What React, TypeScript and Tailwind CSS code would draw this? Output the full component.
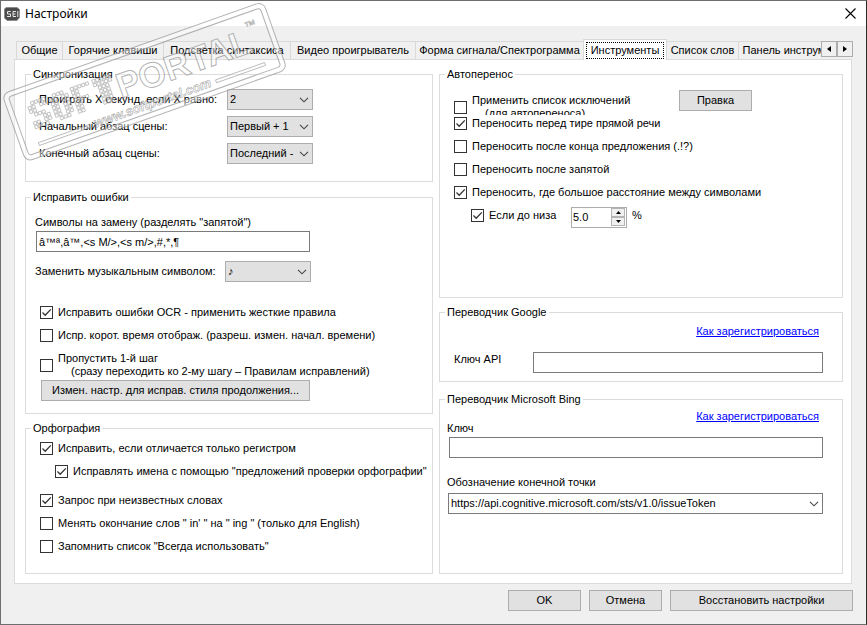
import type { ReactNode } from 'react'

interface CheckProps {
  children: ReactNode
  checked?: boolean
  className?: string
}

interface GroupProps {
  title: string
  className?: string
  bodyClassName?: string
  children: ReactNode
}

interface PickerProps {
  id: string
  value: string
  className: string
}

const tabs = [
  { label: 'Общие', width: 'w-[47px] border-l' },
  { label: 'Горячие клавиши', width: 'w-[101px]' },
  { label: 'Подсветка синтаксиса', width: 'w-[127px]' },
  { label: 'Видео проигрыватель', width: 'w-[125px]' },
  { label: 'Форма сигнала/Спектрограмма', width: 'w-[168px]' },
  { label: 'Инструменты', width: 'w-[84px]', active: true },
  { label: 'Список слов', width: 'w-[72px]' },
  { label: 'Панель инструментов', width: 'w-[120px]' },
]

const softLetters = [
  ['01111', '11011', '11000', '01110', '00011', '11011', '11110'],
  ['01110', '11011', '11011', '11011', '11011', '11011', '01110'],
  ['11111', '11000', '11000', '11110', '11000', '11000', '11000'],
  ['11111', '11111', '01110', '01110', '01110', '01110', '01110'],
]

function Group({ title, className = '', bodyClassName = '', children }: GroupProps) {
  return (
    <fieldset className={`min-w-0 border border-[#dcdcdc] ${className}`}>
      <legend className="ml-[5px] px-[2px] leading-[15px]">{title}</legend>
      <div className={bodyClassName}>{children}</div>
    </fieldset>
  )
}

function Check({ children, checked = false, className = 'h-[17px]' }: CheckProps) {
  return (
    <label className={`flex items-center gap-[5px] whitespace-nowrap ${className}`}>
      <span className="grid size-[13px] shrink-0">
        <input
          type="checkbox"
          defaultChecked={checked}
          className="peer col-start-1 row-start-1 size-[13px] appearance-none border border-[#333] bg-white"
        />
        <svg
          viewBox="0 0 13 13"
          className="pointer-events-none invisible col-start-1 row-start-1 size-[13px] peer-checked:visible"
        >
          <path d="M2.5 6.5 5.2 9.2 10.8 3.4" fill="none" stroke="#333" strokeWidth="1.3" />
        </svg>
      </span>
      {children}
    </label>
  )
}

function Picker({ id, value, className }: PickerProps) {
  return (
    <span className={`grid h-[21px] ${className}`}>
      <select
        id={id}
        defaultValue={value}
        className="col-start-1 row-start-1 w-full min-w-0 appearance-none border border-inherit bg-inherit pr-4 pl-[2px] text-black"
      >
        <option>{value}</option>
      </select>
      <svg
        viewBox="0 0 10 6"
        className="pointer-events-none col-start-1 row-start-1 mr-1 h-[6px] w-[10px] self-center justify-self-end"
      >
        <path d="M1 .8 5 4.8 9 .8" fill="none" stroke="#444" strokeWidth="1.1" />
      </svg>
    </span>
  )
}

function Button({ children, className = '' }: { children: ReactNode; className?: string }) {
  return (
    <button type="button" className={`h-[21px] border border-[#adadad] bg-[#e1e1e1] ${className}`}>
      {children}
    </button>
  )
}

function Stamp() {
  return (
    <svg
      viewBox="0 0 290 168"
      className="pointer-events-none absolute top-0 left-0 z-20 h-[168px] w-[290px]"
      aria-hidden="true"
    >
      <g
        transform="translate(1 93) rotate(-19.5)"
        fill="#fff"
        fillOpacity="0.45"
        stroke="#8a8a8a"
        strokeOpacity="0.65"
        strokeWidth="1"
        fontFamily="Liberation Sans, sans-serif"
      >
        <path
          fillRule="evenodd"
          d="M7 0H270a7 7 0 0 1 7 7V65a7 7 0 0 1-7 7H7a7 7 0 0 1-7-7V7a7 7 0 0 1 7-7ZM8 5a3 3 0 0 0-3 3V64a3 3 0 0 0 3 3H269a3 3 0 0 0 3-3V8a3 3 0 0 0-3-3Z"
        />
        {softLetters.map((rows, l) =>
          rows.map((cells, r) =>
            cells.split('').map((on, c) =>
              on === '1' ? (
                <rect key={`${l}${r}${c}`} x={20 + l * 23 + c * 4} y={17 + r * 4} width="3" height="3" strokeWidth="0.7" />
              ) : null,
            ),
          ),
        )}
        <text x="111" y="44" fontSize="35" fontWeight="bold">PORTAL</text>
        <text x="251" y="22" fontSize="12" strokeWidth="0.6">™</text>
        <text x="77" y="63" fontSize="13" fontWeight="bold" fontStyle="italic" strokeWidth="0.7">
          www.softportal.com
        </text>
        <rect x="18" y="58" width="54" height="3" strokeWidth="0.8" />
        <rect x="206" y="58" width="52" height="3" strokeWidth="0.8" />
      </g>
    </svg>
  )
}

function TitleBar() {
  return (
    <header className="flex h-[25px] items-center bg-white pr-[10px] pl-[3px]">
      <svg viewBox="0 0 16 16" className="size-4">
        <path d="M2 1.5h11l2.5 2v8L13 14.5H3L.5 12V3Z" fill="#4b4b4b" stroke="#8c8c8c" />
        <path d="M6.7 5.5H3.5V8h3v2.500H3M12 5.500H9v5h3M9 8h2.500M13.800 5v6" fill="none" stroke="#e8e8e8" />
      </svg>
      <h1 className="ml-[5px] flex-1 font-['Noto_Sans',sans-serif] text-[12px]">Настройки</h1>
      <button type="button" aria-label="Закрыть" className="size-[11px]">
        <svg viewBox="0 0 11 11" className="size-[11px]">
          <path d="m.5.5 10 10m0-10-10 10" stroke="#000" strokeWidth="1.1" />
        </svg>
      </button>
    </header>
  )
}

function TabStrip() {
  return (
    <div className="relative z-10 -mb-px flex h-[21px] items-end">
      <div role="tablist" className="flex h-[21px] min-w-0 flex-1 items-end overflow-hidden pl-[2px]">
        {tabs.map((tab) =>
          tab.active ? (
            <button
              key={tab.label}
              type="button"
              role="tab"
              aria-selected="true"
              className={`-ml-px h-[21px] shrink-0 border border-b-0 border-[#d9d9d9] bg-white p-[2px] ${tab.width}`}
            >
              <span className="block border border-dotted border-black leading-[15px]">{tab.label}</span>
            </button>
          ) : (
            <button
              key={tab.label}
              type="button"
              role="tab"
              aria-selected="false"
              className={`mb-px h-[18px] shrink-0 border-t border-r border-[#d9d9d9] leading-[17px] whitespace-nowrap ${tab.width}`}
            >
              {tab.label}
            </button>
          ),
        )}
      </div>
      <div className="mb-[3px] flex h-4 shrink-0">
        <button type="button" aria-label="Назад" className="flex w-4 items-center justify-center border border-[#adadad]">
          <svg viewBox="0 0 4 6" className="h-[6px] w-1">
            <path d="M4 0v6L0 3Z" />
          </svg>
        </button>
        <button type="button" aria-label="Вперёд" className="flex w-4 items-center justify-center border border-[#adadad]">
          <svg viewBox="0 0 4 6" className="h-[6px] w-1">
            <path d="M0 0v6l4-3Z" />
          </svg>
        </button>
      </div>
    </div>
  )
}

function LeftColumn() {
  return (
    <div className="flex min-w-0 flex-col">
      <Group
        title="Синхронизация"
        className="mb-2"
        bodyClassName="grid grid-cols-[188px_86px] items-center gap-y-[6px] pt-[7px] pb-[17px] pl-[13px]"
      >
        <label htmlFor="play">Проиграть X секунд, если X равно:</label>
        <Picker id="play" value="2" className="border-[#adadad] bg-[#e1e1e1]" />
        <label htmlFor="start">Начальный абзац сцены:</label>
        <Picker id="start" value="Первый + 1" className="border-[#adadad] bg-[#e1e1e1]" />
        <label htmlFor="end">Конечный абзац сцены:</label>
        <Picker id="end" value="Последний -" className="border-[#adadad] bg-[#e1e1e1]" />
      </Group>

      <Group title="Исправить ошибки" className="mb-[7px]" bodyClassName="pt-[10px] pr-2 pb-3 pl-[9px]">
        <label htmlFor="symbols" className="mb-px block">Символы на замену (разделять "запятой")</label>
        <input
          id="symbols"
          defaultValue="â™ª,â™,<s M/>,<s m/>,#,*,¶"
          className="mb-[9px] ml-px block h-[21px] w-[274px] border border-[#7a7a7a] bg-white px-[2px]"
        />
        <div className="mb-[22px] flex items-center">
          <label htmlFor="music" className="w-[190px]">Заменить музыкальным символом:</label>
          <Picker id="music" value="♪" className="w-[86px] border-[#adadad] bg-[#e1e1e1]" />
        </div>
        <div className="pl-[5px]">
          <Check checked>Исправить ошибки OCR - применить жесткие правила</Check>
          <Check className="mt-[6px] h-[17px]">Испр. корот. время отображ. (разреш. измен. начал. времени)</Check>
          <Check className="mt-2 mb-[2px] h-[26px]">
            <span className="leading-[13px]">
              Пропустить 1-й шаг
              <span className="block pl-[13px]">(сразу переходить ко 2-му шагу – Правилам исправлений)</span>
            </span>
          </Check>
          <Button className="ml-px w-[269px]">Измен. настр. для исправ. стиля продолжения...</Button>
        </div>
      </Group>

      <Group title="Орфография" className="flex-1" bodyClassName="pt-1 pb-[18px] pl-[14px]">
        <Check checked>Исправить, если отличается только регистром</Check>
        <Check checked className="mt-[6px] ml-[15px] h-[17px]">
          Исправлять имена с помощью "предложений проверки орфографии"
        </Check>
        <Check checked className="mt-3 h-[17px]">Запрос при неизвестных словах</Check>
        <Check className="mt-[6px] h-[17px]">Менять окончание слов " in' " на " ing " (только для English)</Check>
        <Check className="mt-[6px] h-[17px]">Запомнить список "Всегда использовать"</Check>
      </Group>
    </div>
  )
}

function RightColumn() {
  return (
    <div className="flex min-w-0 flex-col">
      <Group title="Автоперенос" className="mb-[7px]" bodyClassName="pb-[69px] pl-[14px]">
        <div className="flex items-start">
          <div className="mt-3 h-[21px] w-[225px] shrink-0 overflow-hidden">
            <Check className="h-[26px]">
              <span className="leading-[13px]">
                Применить список исключений
                <span className="block pl-[13px]">(для автопереноса)</span>
              </span>
            </Check>
          </div>
          <Button className="mt-2 w-[73px]">Правка</Button>
        </div>
        <div className="flex flex-col gap-[6px]">
          <Check checked>Переносить перед тире прямой речи</Check>
          <Check>Переносить после конца предложения (.!?)</Check>
          <Check>Переносить после запятой</Check>
          <Check checked>Переносить, где большое расстояние между символами</Check>
          <div className="flex items-start pl-[17px]">
            <Check checked className="h-[17px] w-[100px]">Если до низа</Check>
            <div className="flex h-[21px] w-14 border border-[#adadad] bg-white pr-px">
              <input aria-label="Процент" defaultValue="5.0" className="min-w-0 flex-1 pl-px leading-[17px]" />
              <div className="flex w-[14px] flex-col pb-px">
                <button type="button" aria-label="Больше" className="flex flex-1 items-center justify-center border border-[#b4b4b4] bg-[#f0f0f0]">
                  <svg viewBox="0 0 5 3" className="h-[3px] w-[5px]">
                    <path d="M0 3h5L2.500 0Z" />
                  </svg>
                </button>
                <button type="button" aria-label="Меньше" className="flex flex-1 items-center justify-center border border-[#b4b4b4] bg-[#f0f0f0]">
                  <svg viewBox="0 0 5 3" className="h-[3px] w-[5px]">
                    <path d="M0 0h5L2.500 3Z" />
                  </svg>
                </button>
              </div>
            </div>
            <span className="pt-px pl-[5px]">%</span>
          </div>
        </div>
      </Group>

      <Group title="Переводчик Google" className="mb-[10px]" bodyClassName="pt-1 pr-[19px] pb-2 pl-[14px]">
        <div className="mb-[13px] flex justify-end pr-1">
          <a href="#google" className="text-[#0000ff] underline">Как зарегистрироваться</a>
        </div>
        <div className="flex">
          <label htmlFor="google-key" className="w-[79px] shrink-0">Ключ API</label>
          <input id="google-key" className="h-[21px] min-w-0 flex-1 border border-[#7a7a7a] bg-white px-[2px]" />
        </div>
      </Group>

      <Group title="Переводчик Microsoft Bing" className="flex-1" bodyClassName="pt-[2px] pr-[19px] pb-5 pl-[7px]">
        <div className="mb-px flex justify-between pr-1">
          <label htmlFor="bing-key" className="pt-3">Ключ</label>
          <a href="#bing" className="text-[#0000ff] underline">Как зарегистрироваться</a>
        </div>
        <div className="mb-[17px] flex pl-[2px]">
          <input id="bing-key" className="h-[21px] min-w-0 flex-1 border border-[#7a7a7a] bg-white px-[2px]" />
        </div>
        <label htmlFor="endpoint" className="mb-[3px] block">Обозначение конечной точки</label>
        <Picker
          id="endpoint"
          value="https://api.cognitive.microsoft.com/sts/v1.0/issueToken"
          className="ml-px border-[#7a7a7a] bg-white"
        />
      </Group>
    </div>
  )
}

export default function App() {
  return (
    <div className="relative flex min-h-screen flex-col overflow-hidden border border-[#6e6e6e] border-r-[#2b2b2b] bg-[#f0f0f0] font-['Liberation_Sans',Arial,sans-serif] text-[11px] leading-[15px] text-black">
      <TitleBar />
      <main className="flex flex-1 flex-col pt-[13px] pr-[13px] pl-[13px]">
        <TabStrip />
        <div className="mr-px grid flex-1 grid-cols-[408fr_404fr] gap-x-[6px] border border-[#dcdcdc] bg-white pt-[7px] pr-2 pb-[9px] pl-[10px]">
          <LeftColumn />
          <RightColumn />
        </div>
      </main>
      <footer className="flex justify-end gap-2 pt-[6px] pr-[13px] pb-[13px]">
        <Button className="w-[73px]">OK</Button>
        <Button className="w-[73px]">Отмена</Button>
        <Button className="w-[183px]">Восстановить настройки</Button>
      </footer>
      <Stamp />
    </div>
  )
}
